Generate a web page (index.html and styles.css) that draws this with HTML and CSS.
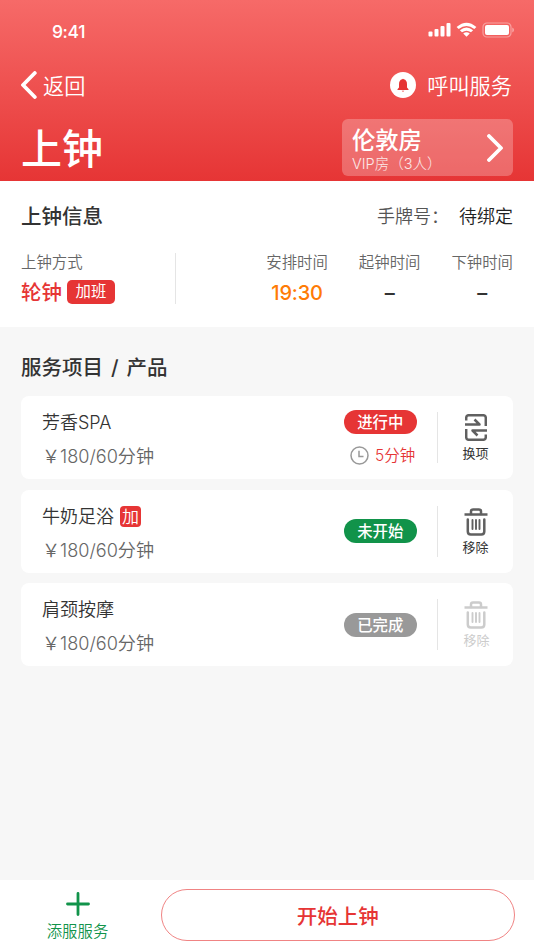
FILE: index.html
```html
<!DOCTYPE html>
<html lang="zh-CN">
<head>
<meta charset="utf-8">
<title>上钟</title>
<link rel="stylesheet" href="styles.css">
</head>
<body>
<svg class="defs" width="0" height="0" aria-hidden="true">
  <symbol id="trash" viewBox="0 0 24 28">
    <g fill="none" stroke="currentColor" stroke-linecap="round" stroke-linejoin="round">
      <path stroke-width="2.500" stroke-linecap="butt" d="M.5 6.500h23"/>
      <path stroke-width="2.500" d="M7 6V3.500q0-2 2-2h6q2 0 2 2v2.500M3.800 11.500v12q0 3 3 3h10.500q3 0 3-3V11.500"/>
      <path stroke-width="1.900" d="M8.500 12v9M12 12v9M15.500 12v9"/>
    </g>
  </symbol>
</svg>
<div class="app">
  <header class="header">
    <div class="status">
      <span class="time">9:41</span>
      <svg class="signals" width="86" height="16" viewBox="0 0 86 16" fill="#fff">
        <rect x="0.500" y="9.500" width="4" height="5" rx="1"/>
        <rect x="6.500" y="7" width="4" height="7.500" rx="1"/>
        <rect x="12.500" y="4" width="4" height="10.500" rx="1"/>
        <rect x="18.500" y="1" width="4" height="13.500" rx="1"/>
        <path d="M28.600 4.900Q38.500-3.600 48.400 4.900L46.300 7.100Q38.500.7 30.700 7.100ZM31.900 8.200Q38.500 2.900 45.100 8.200L43 10.300Q38.500 7 34 10.300ZM35.200 11.500Q38.500 9 41.800 11.500L38.500 14.800Z"/>
        <rect x="55" y="1" width="28" height="14" rx="4" fill="none" stroke="#fff" stroke-opacity=".4" stroke-width="1.200"/>
        <rect x="57" y="3" width="24" height="10" rx="2"/>
        <path d="M84.300 5.500Q86 6.300 86 8T84.300 10.500Z" opacity=".45"/>
      </svg>
    </div>
    <nav class="nav">
      <a class="back"><svg width="17" height="28" viewBox="0 0 17 28"><path d="M13.800 2 2 14l11.800 12" fill="none" stroke="#fff" stroke-width="3.800" stroke-linecap="round" stroke-linejoin="round"/></svg><span>返回</span></a>
      <a class="call"><svg width="26" height="26" viewBox="0 0 26 26"><circle cx="13" cy="13" r="13" fill="#fff"/><path d="M12.200 7.200Q13 6.300 13.800 7.200Q17 8 17 12.200V15.500L18.500 17.300V18H7.500V17.300L9 15.500V12.200Q9 8 12.200 7.200ZM11.700 18.700H14.300Q13 20.500 11.700 18.700Z" fill="#e63535"/></svg><span>呼叫服务</span></a>
    </nav>
    <div class="hero">
      <h1>上钟</h1>
      <div class="room">
        <div><strong>伦敦房</strong><small>VIP房（3人）</small></div>
        <svg width="17" height="28" viewBox="0 0 17 28"><path d="M2 2 14 14 2 26" fill="none" stroke="#fff" stroke-width="3.800" stroke-linecap="round" stroke-linejoin="round"/></svg>
      </div>
    </div>
  </header>

  <section class="info">
    <div class="info-head"><h2>上钟信息</h2><p><span>手牌号：</span><b>待绑定</b></p></div>
    <div class="info-grid">
      <div class="mode"><span class="label">上钟方式</span><div class="mode-value"><strong>轮钟</strong><em>加班</em></div></div>
      <div class="slot"><span class="label">安排时间</span><strong class="orange">19:30</strong></div>
      <div class="slot"><span class="label">起钟时间</span><strong class="dash">–</strong></div>
      <div class="slot"><span class="label">下钟时间</span><strong class="dash">–</strong></div>
    </div>
  </section>

  <main class="services">
    <h2>服务项目 / 产品</h2>
    <article class="card">
      <div class="item"><div class="name">芳香SPA</div><div class="price">￥180/60分钟</div></div>
      <div class="state state-timed"><span class="pill red">进行中</span>
        <span class="remain"><svg width="19" height="19" viewBox="0 0 19 19" fill="none" stroke="#999" stroke-width="1.500"><circle cx="9.500" cy="9.500" r="8.500"/><path d="M9 4.800V10.500H13.500"/></svg>5分钟</span></div>
      <a class="action"><svg width="22" height="27" viewBox="0 0 22 27" fill="none" stroke="currentColor" stroke-width="2.500" stroke-linejoin="round"><path d="M1.200 6.500V3.700Q1.200 1.200 3.700 1.200H18.200Q20.800 1.200 20.800 3.700V12M0 10.500H14.500L9.500 5.500M20.800 20.500V23.300Q20.800 25.800 18.200 25.800H3.700Q1.200 25.800 1.200 23.300V15M22 16.500H7.500L12.500 21.500"/></svg><span>换项</span></a>
    </article>
    <article class="card">
      <div class="item"><div class="name">牛奶足浴<em>加</em></div><div class="price">￥180/60分钟</div></div>
      <div class="state"><span class="pill green">未开始</span></div>
      <a class="action"><svg width="24" height="28"><use href="#trash"/></svg><span>移除</span></a>
    </article>
    <article class="card">
      <div class="item"><div class="name">肩颈按摩</div><div class="price">￥180/60分钟</div></div>
      <div class="state"><span class="pill gray">已完成</span></div>
      <a class="action disabled"><svg width="24" height="28"><use href="#trash"/></svg><span>移除</span></a>
    </article>
  </main>

  <footer class="footer">
    <a class="add"><svg width="24" height="24" viewBox="0 0 24 24"><path d="M12 1.500v21M1.500 12h21" stroke="#11934a" stroke-width="2.800" stroke-linecap="round"/></svg><span>添服服务</span></a>
    <button class="start">开始上钟</button>
  </footer>
</div>
</body>
</html>
```
FILE: styles.css
```css
* { box-sizing: border-box; }
body { margin: 0; font-family: Inter, "Noto Sans CJK SC", sans-serif; font-weight: 400; color: #333; }
h1, h2, p { margin: 0; }
em { font-style: normal; }
svg { display: block; flex: none; }
.defs { position: absolute; }
.app { width: 534px; height: 950px; display: flex; flex-direction: column; background: #f7f7f7; white-space: nowrap; overflow: hidden; }

.header { height: 181px; flex: none; color: #fff; background: linear-gradient(#f66a68, #e63535); }
.status { height: 64px; display: flex; justify-content: space-between; padding: 22px 20px 0 52px; }
.time { font-size: 17.500px; line-height: 20px; font-weight: 500; letter-spacing: -.4px; }
.nav { height: 42px; display: flex; justify-content: space-between; align-items: center; padding: 0 22px 0 21px; font-size: 21.200px; font-weight: 350; }
.back span, .call span { line-height: 32px; padding-top: 1px; }
.back, .call { display: flex; align-items: center; }
.back { gap: 5px; }
.call { gap: 11px; }
.hero { display: flex; justify-content: space-between; padding: 13px 21px 0; }
h1 { font-size: 41px; line-height: 60px; font-weight: 500; }
.room { width: 171px; height: 57px; border-radius: 6px; background: rgba(255,255,255,.25); display: flex; align-items: center; justify-content: space-between; padding: 0 9px 0 10px; }
.room strong { display: block; font-size: 23.300px; line-height: 28px; font-weight: 500; padding-top: 4px; }
.room small { display: block; font-size: 14.500px; line-height: 18px; font-weight: 300; opacity: .85; }

.info { height: 146px; flex: none; background: #fff; padding: 21px 21px 0; }
.info-head { display: flex; justify-content: space-between; align-items: center; height: 30px; }
h2 { font-size: 20.500px; line-height: 30px; font-weight: 500; }
.info-head p { font-size: 18px; line-height: 26px; font-weight: 350; color: #555; }
.info-head b { font-weight: 350; color: #222; margin-left: 10px; }
.info-grid { display: flex; gap: 31px; margin-top: 20px; }
.label { display: block; font-size: 15.400px; line-height: 22px; font-weight: 350; color: #666; }
.mode { width: 155px; height: 51px; margin: 1px auto 0 0; border-right: 1px solid #e5e5e5; }
.mode .label { margin-top: -1px; }
.mode-value { display: flex; align-items: center; gap: 5px; margin-top: 2px; height: 32px; }
.mode-value strong { font-size: 20.500px; line-height: 28px; font-weight: 500; color: #e63535; padding-top: 1px; }
.mode-value em { width: 48px; height: 24px; border-radius: 5px; background: #e63535; color: #fff; font-size: 15.400px; line-height: 24px; text-align: center; }
.slot { text-align: center; }
.slot strong { display: block; font-size: 20px; line-height: 24px; margin-top: 7px; font-weight: 500; letter-spacing: -.2px; }
.slot .orange { color: #ff7b05; }

.services { flex: 1; padding: 26px 21px 0; }
.services h2 { margin-bottom: 13px; word-spacing: 2.500px; }
.card { height: 83px; margin-bottom: 10.500px; border-radius: 8px; background: #fff; display: flex; align-items: center; padding-left: 21px; }
.item { flex: 1; padding-top: 4px; }
.name { font-size: 18px; line-height: 30px; height: 30px; display: flex; align-items: center; font-weight: 350; }
.name em { width: 21px; height: 21px; border-radius: 4px; background: #e63535; color: #fff; font-size: 17px; line-height: 22px; text-align: center; margin: -1px 0 0 6px; }
.price { font-size: 18.100px; line-height: 30px; margin-top: 3px; font-weight: 350; color: #666; }
.state { width: 94px; height: 51px; border-right: 1px solid #e5e5e5; display: flex; flex-direction: column; justify-content: center; }
.state-timed { height: 51px; justify-content: space-between; }
.pill { width: 72.500px; height: 24px; border-radius: 12px; color: #fff; font-size: 15.400px; line-height: 26px; text-align: center; font-weight: 500; }
.state-timed .pill { margin-top: -2px; }
.red { background: #e63535; }
.green { background: #11934a; }
.gray { background: #999; }
.remain { display: flex; align-items: center; gap: 6px; padding-left: 6px; height: 19px; line-height: 19px; margin-bottom: -2px; color: #e63535; font-size: 15.500px; font-weight: 350; }
.action { width: 75px; height: 51px; display: flex; flex-direction: column; align-items: center; justify-content: space-between; color: #606060; }
.action svg { margin-top: 2px; }
.action span { font-size: 13px; line-height: 20px; color: #333; }
.action.disabled, .disabled span { color: #ccc; }
.disabled span { margin-left: 2px; }

.footer { height: 70px; flex: none; display: flex; align-items: center; background: #fff; padding: 0 19.500px 0 0; }
.add { width: 155px; display: flex; flex-direction: column; align-items: center; color: #11934a; gap: 5px; font-size: 15.400px; line-height: 22px; padding-top: 5px; font-weight: 350; }
.start { flex: 1; margin-left: 6px; height: 52px; border: 1px solid #f08484; border-radius: 26px; background: #fff; color: #e63535; font: 500 20.500px/30px Inter, "Noto Sans CJK SC", sans-serif; padding: 3px 0 0; }
```
